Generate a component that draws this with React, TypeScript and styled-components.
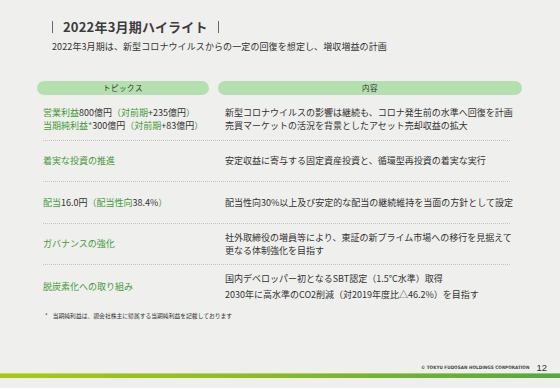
import React from "react";
import styled, { createGlobalStyle } from "styled-components";

const Global = createGlobalStyle`
  html, body { margin: 0; padding: 0; background: #efefed; }
  body { font-family: "Noto Sans CJK JP", "Noto Sans", sans-serif; color: #333; }
`;

const Page = styled.div`
  width: 560px;
  height: 388px;
  display: flex;
  flex-direction: column;
  background: #efefed;
  overflow: hidden;
`;

const Header = styled.header`
  padding: 19px 0 0 52px;
`;

const Title = styled.h1`
  margin: 0;
  font-size: 13px;
  line-height: 16px;
  font-weight: 700;
  color: #3c3c3c;
  display: flex;
  align-items: center;
  gap: 10px;
  letter-spacing: 0.2px;
`;

const Bar = styled.span`
  display: block;
  width: 1px;
  height: 12px;
  background: #6a6a6a;
`;

const Subtitle = styled.p`
  margin: 6px 0 0 0;
  font-size: 9px;
  line-height: 12px;
  color: #333;
  letter-spacing: 0.1px;
`;

const HeadRow = styled.div`
  margin: 28px 0 0 37px;
  display: grid;
  grid-template-columns: 172px 304px;
  column-gap: 9px;
`;

const Pill = styled.div`
  height: 14px;
  border-radius: 7px;
  background: #b4e0b0;
  font-size: 7.5px;
  line-height: 14px;
  text-align: center;
  color: #333;
  letter-spacing: 0.5px;
`;

const Rows = styled.div`
  margin: 4px 0 0 43px;
  width: 467px;
`;

const Row = styled.div<{ $last?: boolean }>`
  box-sizing: border-box;
  height: ${(p) => (p.$last ? "42.6px" : "41.6px")};
  display: grid;
  grid-template-columns: 182px 1fr;
  align-items: center;
  border-bottom: ${(p) => (p.$last ? "none" : "1px dotted #c4c4c4")};
`;

const Topic = styled.div<{ $lh?: number }>`
  font-size: 9px;
  line-height: ${(p) => p.$lh ?? 13.4}px;
  color: #333;
`;

const G = styled.span`
  color: #3e9c34;
`;

const Detail = styled.div<{ $lh?: number }>`
  font-size: 9px;
  line-height: ${(p) => p.$lh ?? 13.4}px;
  color: #333;
  white-space: nowrap;
`;

const Note = styled.p`
  margin: 4px 0 0 45px;
  font-size: 5.8px;
  line-height: 8px;
  color: #333;
  display: flex;
  gap: 5px;
`;

const Footer = styled.footer`
  margin-top: auto;
  display: flex;
  flex-direction: column;
`;

const FooterLine = styled.div`
  height: 10px;
  display: flex;
  justify-content: flex-end;
  align-items: center;
  gap: 7px;
  padding-right: 13px;
`;

const Copy = styled.span`
  font-family: "DejaVu Sans Condensed", "DejaVu Sans", sans-serif;
  font-size: 4.6px;
  font-weight: 700;
  color: #444;
  letter-spacing: 0.05px;
`;

const PageNo = styled.span`
  font-family: "Liberation Sans", sans-serif;
  font-size: 9.5px;
  color: #333;
`;

const GreenBar = styled.div`
  margin: 1px 0 10px;
  height: 5px;
  background: linear-gradient(90deg, #a9c814 0%, #8dbc22 45%, #55a83e 100%);
  box-shadow: inset 0 1px 0 rgba(255, 255, 255, 0.35);
`;

export default function App() {
  return (
    <Page>
      <Global />
      <Header>
        <Title>
          <Bar />
          <span>2022年3月期ハイライト</span>
          <Bar />
        </Title>
        <Subtitle>2022年3月期は、新型コロナウイルスからの一定の回復を想定し、増収増益の計画</Subtitle>
      </Header>
      <HeadRow>
        <Pill>トピックス</Pill>
        <Pill>内容</Pill>
      </HeadRow>
      <Rows>
        <Row>
          <Topic>
            <div>
              <G>営業利益</G>800億円<G>（対前期</G>+235億円<G>）</G>
            </div>
            <div>
              <G>当期純利益*</G>300億円<G>（対前期</G>+83億円<G>）</G>
            </div>
          </Topic>
          <Detail>
            <div>新型コロナウイルスの影響は継続も、コロナ発生前の水準へ回復を計画</div>
            <div>売買マーケットの活況を背景としたアセット売却収益の拡大</div>
          </Detail>
        </Row>
        <Row>
          <Topic>
            <G>着実な投資の推進</G>
          </Topic>
          <Detail>安定収益に寄与する固定資産投資と、循環型再投資の着実な実行</Detail>
        </Row>
        <Row>
          <Topic>
            <G>配当</G>16.0円<G>（配当性向</G>38.4%<G>）</G>
          </Topic>
          <Detail>配当性向30%以上及び安定的な配当の継続維持を当面の方針として設定</Detail>
        </Row>
        <Row>
          <Topic>
            <G>ガバナンスの強化</G>
          </Topic>
          <Detail>
            <div>社外取締役の増員等により、東証の新プライム市場への移行を見据えて</div>
            <div>更なる体制強化を目指す</div>
          </Detail>
        </Row>
        <Row $last>
          <Topic>
            <G>脱炭素化への取り組み</G>
          </Topic>
          <Detail $lh={16}>
            <div>国内デベロッパー初となるSBT認定（1.5°C水準）取得</div>
            <div>2030年に高水準のCO2削減（対2019年度比△46.2%）を目指す</div>
          </Detail>
        </Row>
      </Rows>
      <Note>
        <span>*</span>
        <span>当期純利益は、親会社株主に帰属する当期純利益を記載しております</span>
      </Note>
      <Footer>
        <FooterLine>
          <Copy>© TOKYU FUDOSAN HOLDINGS CORPORATION</Copy>
          <PageNo>12</PageNo>
        </FooterLine>
        <GreenBar />
      </Footer>
    </Page>
  );
}
